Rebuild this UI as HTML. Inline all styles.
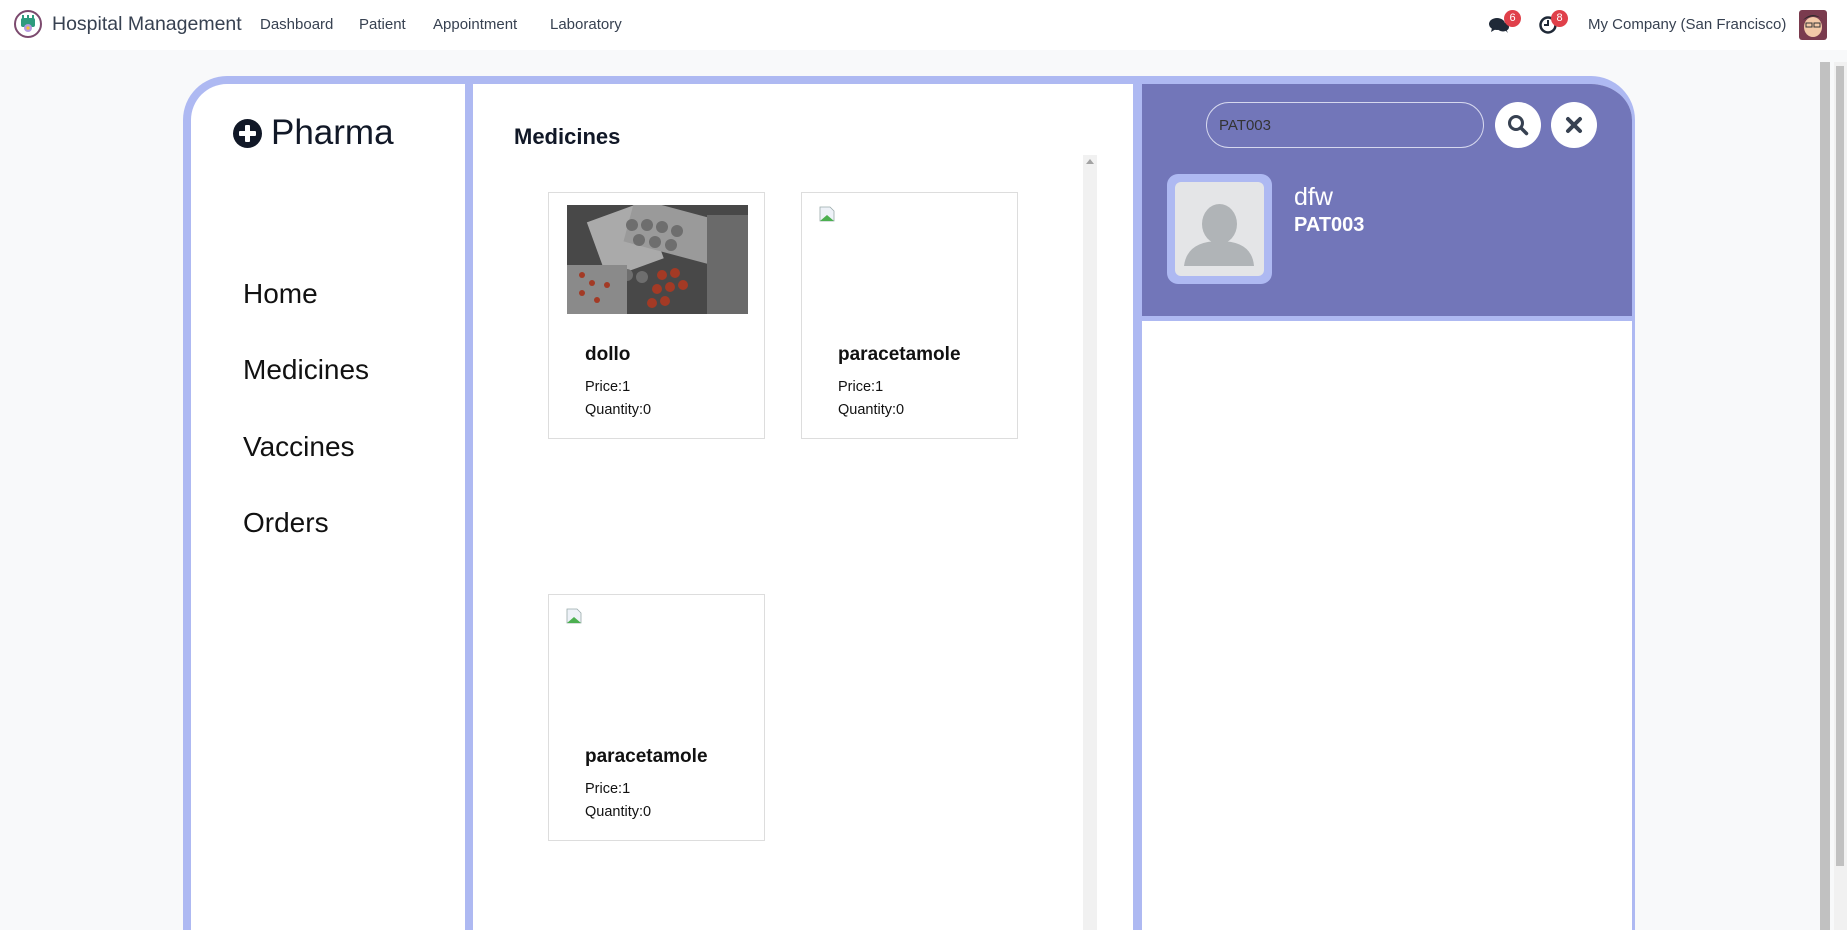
<!DOCTYPE html>
<html><head><meta charset="utf-8"><style>
*{box-sizing:border-box;margin:0;padding:0}
html{width:1847px;height:930px;overflow:hidden}
body{width:1847px;height:930px;overflow:hidden;background:#f8f9fa;font-family:"Liberation Sans","DejaVu Sans",sans-serif;position:relative;color:#111827}
.nav{position:absolute;left:0;top:0;width:1847px;height:50px;background:#fff}
.abs{position:absolute}
.navt{position:absolute;top:16px;font-size:15px;color:#374151}
.badge{position:absolute;width:17px;height:17px;border-radius:50%;background:#e0404a;color:#fff;font-size:11px;text-align:center;line-height:17px}
.frame{position:absolute;left:183px;top:76px;width:1452px;height:854px;border:8px solid #aeb9f2;border-right-width:3px;border-bottom:0;border-radius:44px 44px 0 0;background:#fff;overflow:hidden}
.card{position:absolute;width:217px;height:247px;border:1px solid #ddd;background:#fff}
.card .t{position:absolute;left:36px;top:151px;font-size:19px;font-weight:bold;color:#111}
.card .p{position:absolute;left:36px;font-size:14.5px;color:#111}
</style></head><body>
<div class="nav">
 <svg class="abs" style="left:13px;top:9px" width="30" height="30" viewBox="0 0 30 30"><circle cx="15" cy="15" r="13" fill="#fff" stroke="#7c4a6e" stroke-width="2"/><rect x="8" y="9" width="14" height="9" rx="2" fill="#2e9b7e"/><rect x="9" y="6" width="2" height="4" fill="#2e9b7e"/><rect x="14" y="6" width="2" height="4" fill="#2e9b7e"/><rect x="19" y="6" width="2" height="4" fill="#2e9b7e"/><circle cx="15" cy="19" r="4" fill="#b59be0"/><circle cx="15" cy="19" r="1.6" fill="#f4c430"/></svg>
 <div class="navt" style="left:52px;top:13px;font-size:19.5px;color:#374151">Hospital Management</div>
 <div class="navt" style="left:260px">Dashboard</div>
 <div class="navt" style="left:359px">Patient</div>
 <div class="navt" style="left:433px">Appointment</div>
 <div class="navt" style="left:550px">Laboratory</div>
 <svg class="abs" style="left:1489px;top:17px" width="22" height="18" viewBox="0 0 22 18"><ellipse cx="8" cy="7" rx="8" ry="6" fill="#1f2937"/><path d="M3 11 L2 15 L7 12Z" fill="#1f2937"/><ellipse cx="14" cy="10" rx="6" ry="4.5" fill="#1f2937"/><path d="M16 13 L19 16 L17 12Z" fill="#1f2937"/></svg>
 <div class="badge" style="left:1504px;top:10px">6</div>
 <svg class="abs" style="left:1538px;top:15px" width="20" height="20" viewBox="0 0 20 20"><circle cx="10" cy="10" r="7.5" fill="none" stroke="#1f2937" stroke-width="2.5"/><path d="M10 5 V10 H6" stroke="#1f2937" stroke-width="2" fill="none"/></svg>
 <div class="badge" style="left:1551px;top:10px">8</div>
 <div class="navt" style="left:1588px">My Company (San Francisco)</div>
 <svg class="abs" style="left:1799px;top:10px" width="28" height="30" viewBox="0 0 28 30"><rect width="28" height="30" rx="3" fill="#7a3b4e"/><ellipse cx="14" cy="17" rx="9" ry="10" fill="#f3c9a8"/><path d="M4 10 Q14 0 24 10 L22 8 Q14 4 6 9Z" fill="#2b2b2b"/><rect x="7" y="13" width="6" height="4" fill="none" stroke="#333"/><rect x="15" y="13" width="6" height="4" fill="none" stroke="#333"/></svg>
</div>
<div class="abs" style="left:1820px;top:62px;width:10px;height:868px;background:#c1c1c1"></div>
<div class="abs" style="left:1834px;top:62px;width:13px;height:868px;background:#f1f1f1"></div>
<div class="abs" style="left:1836px;top:66px;width:8px;height:800px;background:#c1c1c1"></div>

<div class="frame">
 <div class="abs" style="left:274px;top:0;width:8px;height:854px;background:#aeb9f2"></div>
 <div class="abs" style="left:942px;top:0;width:9px;height:854px;background:#aeb9f2"></div>
 <svg class="abs" style="left:42px;top:35px" width="29" height="29" viewBox="0 0 29 29"><circle cx="14.5" cy="14.5" r="14.5" fill="#111827"/><rect x="12" y="6" width="5" height="17" rx="1" fill="#fff"/><rect x="6" y="12" width="17" height="5" rx="1" fill="#fff"/></svg>
 <div class="abs" style="left:80px;top:29px;font-size:35px;color:#111827">Pharma</div>
 <div class="abs" style="left:52px;top:194px;font-size:28px;color:#111">Home</div>
 <div class="abs" style="left:52px;top:270px;font-size:28px;color:#111">Medicines</div>
 <div class="abs" style="left:52px;top:347px;font-size:28px;color:#111">Vaccines</div>
 <div class="abs" style="left:52px;top:423px;font-size:28px;color:#111">Orders</div>
 <div class="abs" style="left:323px;top:40px;font-size:22px;font-weight:bold;color:#111827">Medicines</div>
 <div class="abs" style="left:892px;top:71px;width:14px;height:783px;background:#f1f1f1"></div>
 <div class="abs" style="left:895px;top:75px;width:0;height:0;border-left:4px solid transparent;border-right:4px solid transparent;border-bottom:5px solid #a3a3a3"></div>
 <div class="card" style="left:357px;top:108px">
  <svg class="abs" style="left:18px;top:12px" width="181" height="109" viewBox="0 0 181 109"><rect width="181" height="109" fill="#3a3a3a"/><rect x="0" y="0" width="181" height="109" fill="#555" opacity=".5"/><g transform="rotate(-20 60 40)"><rect x="30" y="5" width="60" height="60" fill="#aaa"/></g><g transform="rotate(15 110 30)"><rect x="60" y="5" width="90" height="45" fill="#9a9a9a"/></g><g fill="#6e6e6e"><circle cx="65" cy="20" r="6"/><circle cx="80" cy="20" r="6"/><circle cx="95" cy="22" r="6"/><circle cx="110" cy="26" r="6"/><circle cx="72" cy="35" r="6"/><circle cx="88" cy="37" r="6"/><circle cx="104" cy="40" r="6"/><circle cx="60" cy="70" r="6"/><circle cx="75" cy="72" r="6"/></g><rect x="0" y="60" width="60" height="49" fill="#8a8a8a"/><g fill="#a33a25"><circle cx="95" cy="70" r="5"/><circle cx="108" cy="68" r="5"/><circle cx="90" cy="84" r="5"/><circle cx="103" cy="82" r="5"/><circle cx="116" cy="80" r="5"/><circle cx="85" cy="98" r="5"/><circle cx="98" cy="96" r="5"/><circle cx="15" cy="70" r="3"/><circle cx="25" cy="78" r="3"/><circle cx="15" cy="88" r="3"/><circle cx="30" cy="95" r="3"/><circle cx="40" cy="80" r="3"/></g><rect x="140" y="10" width="41" height="99" fill="#6a6a6a"/></svg>
  <div class="t">dollo</div><div class="p" style="top:186px">Price:1</div><div class="p" style="top:209px">Quantity:0</div>
 </div>
 <div class="card" style="left:610px;top:108px">
  <svg class="abs" style="left:17px;top:13px" width="16" height="16" viewBox="0 0 16 16"><path d="M1 1 H11 L15 5 V15 H1Z" fill="#eef2f8" stroke="#9aa" stroke-width=".8"/><path d="M1 15 L8 9 L15 15Z" fill="#4caf50"/></svg>
  <div class="t">paracetamole</div><div class="p" style="top:186px">Price:1</div><div class="p" style="top:209px">Quantity:0</div>
 </div>
 <div class="card" style="left:357px;top:510px">
  <svg class="abs" style="left:17px;top:13px" width="16" height="16" viewBox="0 0 16 16"><path d="M1 1 H11 L15 5 V15 H1Z" fill="#eef2f8" stroke="#9aa" stroke-width=".8"/><path d="M1 15 L8 9 L15 15Z" fill="#4caf50"/></svg>
  <div class="t">paracetamole</div><div class="p" style="top:186px">Price:1</div><div class="p" style="top:209px">Quantity:0</div>
 </div>
 <div class="abs" style="left:951px;top:0;width:498px;height:232px;background:#7276b9"></div>
 <div class="abs" style="left:951px;top:232px;width:498px;height:5px;background:#aeb9f2"></div>
 <div class="abs" style="left:1015px;top:18px;width:278px;height:46px;border:1px solid #d6d8ee;border-radius:23px;padding:14px 12px;font-size:15px;color:#333">PAT003</div>
 <div class="abs" style="left:1304px;top:18px;width:46px;height:46px;border-radius:50%;background:#fff"></div>
 <svg class="abs" style="left:1316px;top:30px" width="22" height="22" viewBox="0 0 22 22"><circle cx="9" cy="9" r="6.5" fill="none" stroke="#374151" stroke-width="3"/><path d="M14 14 L19.5 19.5" stroke="#374151" stroke-width="3.5" stroke-linecap="round"/></svg>
 <div class="abs" style="left:1360px;top:18px;width:46px;height:46px;border-radius:50%;background:#fff"></div>
 <svg class="abs" style="left:1374px;top:32px" width="18" height="18" viewBox="0 0 18 18"><path d="M3 3 L15 15 M15 3 L3 15" stroke="#374151" stroke-width="4" stroke-linecap="round"/></svg>
 <div class="abs" style="left:976px;top:90px;width:105px;height:110px;border-radius:11px;background:#aeb9f2"></div>
 <div class="abs" style="left:984px;top:98px;width:89px;height:94px;border-radius:6px;background:#e4e5e7;overflow:hidden">
  <svg width="89" height="94" viewBox="0 0 89 94"><ellipse cx="44.5" cy="42" rx="17.5" ry="20" fill="#b0b4b7"/><path d="M9 84 Q12 59 44.5 59 Q77 59 79 84Z" fill="#b0b4b7"/></svg>
 </div>
 <div class="abs" style="left:1103px;top:99px;font-size:25px;color:#fff">dfw</div>
 <div class="abs" style="left:1103px;top:130px;font-size:20px;font-weight:bold;color:#fff">PAT003</div>
</div>
</body></html>
